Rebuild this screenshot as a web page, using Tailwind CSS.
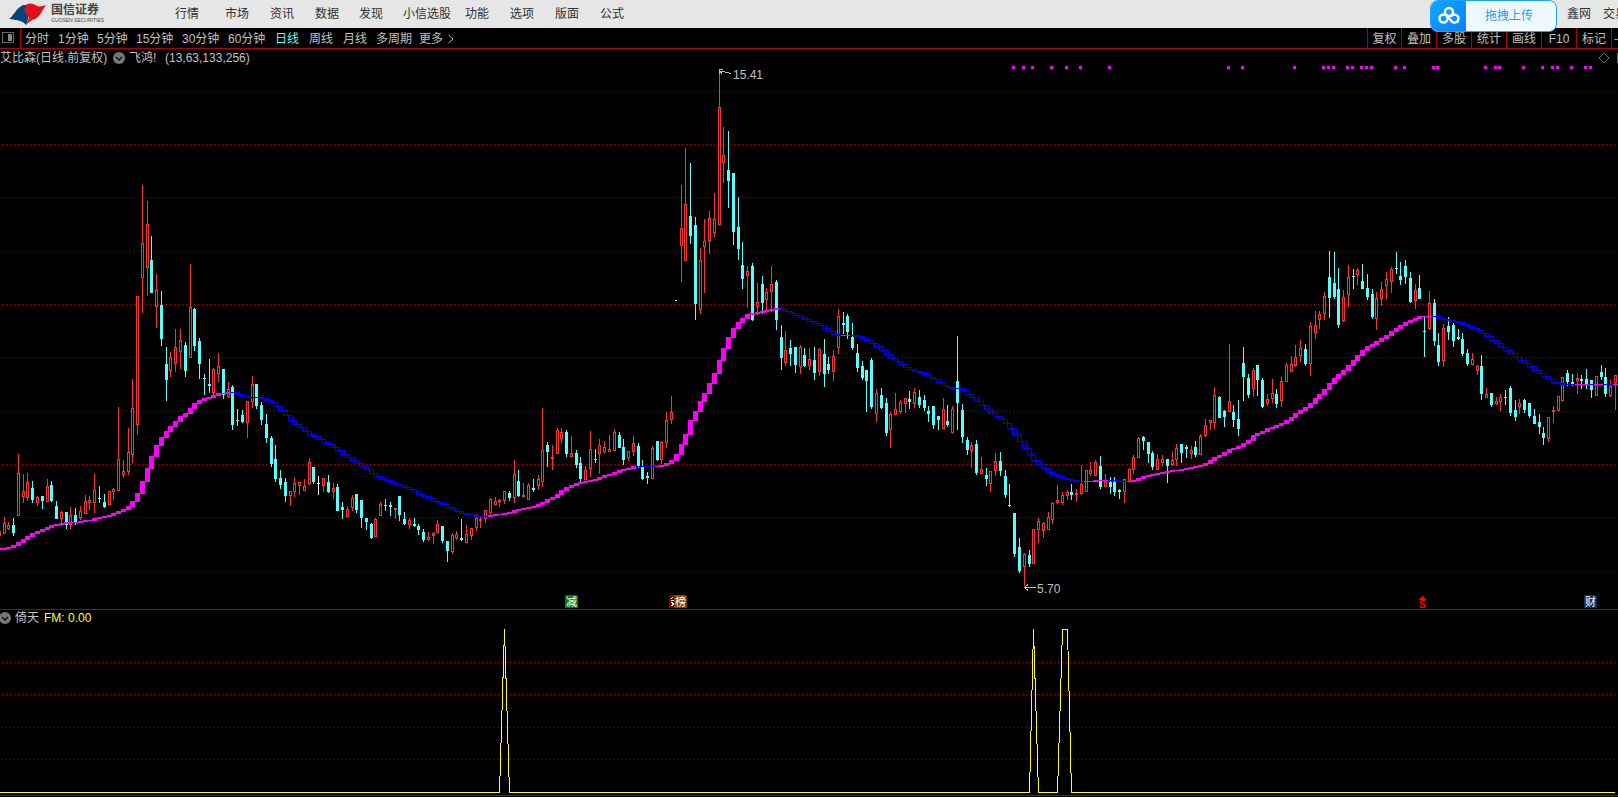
<!DOCTYPE html>
<html lang="zh-CN">
<head>
<meta charset="utf-8">
<title>国信证券</title>
<script src="https://cdn.jsdelivr.net/npm/@tailwindcss/browser@4"></script>
</head>
<body class="bg-black text-[#c0c0c0] text-xs font-['Liberation_Sans','Noto_Sans_CJK_SC',sans-serif] overflow-x-hidden">
<header class="relative flex h-7 items-center bg-[#e6e6e6] text-[#303030] whitespace-nowrap">
  <a href="#" class="flex w-[175px] shrink-0 items-center gap-1 pl-2" aria-label="国信证券">
    <svg class="h-6 w-[39px]" viewBox="0 0 39 24">
      <path d="M1 17 C6 14 7 7 15 3 L20 3 L20 17 L18 23 C14 18 8 18 1 17Z" fill="#00457c"/>
      <path d="M18 3 C22 0 26 2 29 4 C32 5 35 4 38 3 C34 8 33 14 27 17 C23 18 21 20 18 23 C19 19 22 17 20 14 C17 11 15 8 18 3Z" fill="#e0101c"/>
    </svg>
    <span class="flex flex-col text-[#444]">
      <span class="text-[12px] leading-[13px] font-bold">国信证券</span>
      <span class="text-[5px] leading-[7px]">GUOSEN SECURITIES</span>
    </span>
  </a>
  <nav class="grid grid-cols-[50px_45px_45px_44px_44px_62px_45px_45px_45px_auto] pb-px">
    <a href="#">行情</a><a href="#">市场</a><a href="#">资讯</a><a href="#">数据</a><a href="#">发现</a><a href="#">小信选股</a><a href="#">功能</a><a href="#">选项</a><a href="#">版面</a><a href="#">公式</a>
  </nav>
  <div class="ml-auto flex w-[51px] gap-3 overflow-hidden"><a href="#">鑫网</a><a href="#">交易</a></div>
  <button class="absolute top-0 right-[61px] z-10 flex h-8 w-[127px] overflow-hidden rounded-lg border border-[#18a5ff] bg-[#eef8ff] text-[#1b9bff]">
    <span class="flex h-full w-[35px] items-center justify-center bg-linear-to-br from-[#12a6ff] to-[#0d82ff]">
      <svg class="h-5 w-[22px]" viewBox="0 0 22 20" fill="none" stroke="#fff" stroke-width="2.4" stroke-linecap="round"><circle cx="11" cy="6" r="4"/><circle cx="5.5" cy="12.500" r="4"/><path d="M14 9.500 A4 4 0 1 1 13 14.500 L9 10"/><circle cx="19.500" cy="15.500" r=".3"/></svg>
    </span>
    <span class="flex h-full flex-1 items-center justify-center pr-1">拖拽上传</span>
  </button>
</header>

<div class="flex h-[21px] items-stretch border-b border-[#b00000] whitespace-nowrap">
  <button class="flex w-[21px] items-center justify-center border-r border-[#b00000] pr-1" aria-label="侧栏">
    <svg class="size-3" viewBox="0 0 12 12" shape-rendering="crispEdges"><rect x=".5" y=".5" width="11" height="10" fill="none" stroke="#666"/><rect x="6" y="2" width="4" height="7" fill="#888"/></svg>
  </button>
  <nav class="grid grid-cols-[33px_39px_39px_46px_46px_47px_34px_34px_33px_43px_28px_auto] items-center pt-0.5 pl-1">
    <a href="#">分时</a><a href="#">1分钟</a><a href="#">5分钟</a><a href="#">15分钟</a><a href="#">30分钟</a><a href="#">60分钟</a><a href="#" class="text-[#54ffff]">日线</a><a href="#">周线</a><a href="#">月线</a><a href="#">多周期</a><a href="#">更多</a>
    <svg class="h-3 w-2" viewBox="0 0 8 12" fill="none" stroke="#c0c0c0"><path d="M1.500 2 L6 6 L1.500 10"/></svg>
  </nav>
  <div class="ml-auto grid grid-cols-[34px_35px_35px_35px_35px_35px_35px_7px] overflow-hidden">
    <button class="border-l border-[#b00000] pt-0.5">复权</button><button class="border-l border-[#b00000] pt-0.5">叠加</button><button class="border-l border-[#b00000] pt-0.5">多股</button><button class="border-l border-[#b00000] pt-0.5">统计</button><button class="border-l border-[#b00000] pt-0.5">画线</button><button class="border-l border-[#b00000] pt-0.5">F10</button><button class="border-l border-[#b00000] pt-0.5">标记</button><button class="border-l border-[#b00000] pt-0.5 pl-0.5 text-left">-</button>
  </div>
</div>

<main>
  <section>
    <div class="flex h-[17px] items-center whitespace-nowrap">
      <h1 class="w-[113px]">艾比森(日线.前复权)</h1>
      <button aria-label="指标菜单"><svg class="size-3" viewBox="0 0 12 12"><circle cx="6" cy="6" r="6" fill="#777"/><path d="M3 5 L6 8 L9 5" fill="none" stroke="#111" stroke-width="1.500"/></svg></button>
      <span class="w-[40px] pl-1">飞鸿!</span><span>(13,63,133,256)</span>
      <svg class="ml-auto h-3 w-5" viewBox="0 0 20 12" fill="none" stroke="#707070"><path d="M6 1 L11 6 L6 11 L1 6Z" /><path d="M20 1.500 H19.500 V10.500 H20"/></svg>
    </div>
    <svg id="price" class="block w-full" viewBox="0 66 1618 543" shape-rendering="crispEdges" role="img" aria-label="日线K线图">
      <g id="grid"></g><g id="dots" fill="#f0f"></g><g id="candles"></g><g id="average"></g>
      <rect x="675" y="300" width="2" height="1" fill="#fff"/>
      <g fill="none" stroke="#c0c0c0"><path d="M719.500 74 V69.500 H723 M721 71 L731 73.500 M720 71 L722 74"/><path d="M1024 587.500 H1036 M1028 584.500 L1024.500 587.500 L1028 590.500"/></g>
      <g font-size="12" fill="#c0c0c0"><text x="733" y="79">15.41</text><text x="1037" y="593">5.70</text></g>
      <g>
        <path d="M565 595 H576 L578 597 V608 H565Z" fill="#008000"/>
        <rect x="669" y="595" width="6" height="13" fill="#800000"/>
        <path d="M671 599 L673 597 M671 600 H674 M671 602 L674 604 M671 606 L674 604" stroke="#fff" fill="none"/>
        <path d="M674 595 H685 L687 597 V608 H674Z" fill="#804000"/>
        <path d="M1584 595 H1595 L1597 597 V608 H1584Z" fill="#003366"/>
        <path d="M1422.500 596 L1426 600 H1419Z" fill="#f00"/>
      </g>
      <g font-size="11" fill="#fff"><text x="566" y="606">减</text><text x="675" y="606">榜</text><text x="1585" y="606">财</text><text x="1419" y="608" fill="#f00" font-weight="bold" font-size="10">S</text></g>
    </svg>
  </section>
  <section class="border-y border-[#b00000]">
    <div class="flex h-[17px] items-center pb-0.5 whitespace-nowrap">
      <button class="w-[15px]" aria-label="副图菜单"><svg class="size-3" viewBox="1 0 12 12"><circle cx="6" cy="6" r="6" fill="#777"/><path d="M3 5 L6 8 L9 5" fill="none" stroke="#111" stroke-width="1.500"/></svg></button>
      <span class="w-[29px]">倚天</span><span class="text-[#ffff22]">FM: 0.00</span>
    </div>
    <svg id="signal" class="block w-full" viewBox="0 627 1618 168" shape-rendering="crispEdges" role="img" aria-label="FM 指标">
      <g id="signalGrid"></g>
      <path d="M0 792.500 H499.500 L504.500 629 L509.500 792.500 H1029.500 L1033.500 629 L1038.500 792.500 H1057.500 L1062.500 629.500 H1067.500 L1071.500 792.500 H1615" fill="none" stroke="#ff0"/>
    </svg>
  </section>
</main>

<script>
// Each block: x and y origin, then candles in one-third pixel units:
// kind (r = up, c = down, w = flat), centre x, high, body top, body bottom, low.
const blocks = [
[0,170,`r -3 1083 1083 1098 1098;r 13 1041 1059 1092 1092;r 25 1056 1065 1077 1080;c 40 1044 1065 1089 1098;r 55 852 909 1038 1038;r 70 912 963 981 999;r 82 909 936 984 993;c 97 933 954 990 999;r 112 978 981 999 1008;c 127 978 978 993 1017;r 142 927 948 996 996;c 154 933 945 993 996;c 169 993 1008 1047 1047;r 184 1023 1026 1047 1068;c 199 1026 1026 1065 1077;r 211 1011 1035 1065 1077;c 226 1014 1035 1056 1065;r 241 1008 1023 1044 1050;r 256 975 993 1032 1032;r 268 978 990 999 1020;r 283 912 960 999 1029;c 298 948 984 987 999;c 313 972 996 1011 1014;r 328 963 963 1005 1005;r 340 954 957 966 990;r 355 711 867 963 963;r 370 870 903 915 924;r 385 774 846 906 915;r 397 627 714 855 879;r 412 378 378 765 795;r 427 45 219 324 429;r 442 93 162 294 378;c 454 198 270 369 369;r 469 312 360 411 474;c 484 363 405 507 528;c 499 531 582 630 693;r 511 546 561 603 621;r 526 477 531 582 606;r 541 477 510 546 597;c 556 516 525 603 621;r 571 282 411 564 564;c 583 414 417 528 543;c 598 504 513 582 627;c 613 612 624 627 675;c 628 567 642 648 669;r 640 594 597 669 675;r 655 549 588 612 636;c 670 597 597 675 687;r 685 636 657 681 684;c 697 645 651 765 780;c 712 717 750 753 768;c 727 720 735 756 759;r 742 693 693 759 804;r 757 618 642 696 714;c 769 642 642 708 717;c 784 696 705 750 765;c 799 732 762 804 819;c 814 798 804 882 891;c 826 825 867 927 936`],
[240,340,`c 121 390 414 435 447;c 136 414 426 468 486;r 151 453 453 468 498;r 163 411 429 456 471;r 178 426 426 438 465;r 193 417 438 453 453;r 208 354 366 432 435;c 220 381 381 426 432;w 235 408 430 433 465;r 250 414 414 438 456;c 265 405 426 456 459;r 280 429 444 456 477;c 292 432 441 513 513;c 307 486 501 510 537;r 322 498 507 531 531;r 337 465 474 504 513;c 349 462 462 510 519;c 364 480 480 534 564;c 379 534 534 546 570;c 394 549 552 594 597;r 406 534 537 591 591;r 421 486 492 528 528;c 436 477 495 498 513;c 451 486 495 501 528;r 466 504 504 510 537;c 478 468 468 525 543;c 493 516 537 552 555;r 508 534 540 555 567;c 523 534 552 558 561;c 535 552 558 570 585;c 550 567 576 600 606;r 565 576 591 600 603;r 580 576 579 588 612;r 592 540 552 579 579;c 607 558 558 603 609;c 622 603 603 633 666;r 637 579 585 636 642;r 649 573 582 594 600;c 664 537 594 600 603;r 679 555 582 609 609;r 694 564 564 588 600;r 709 522 534 564 573;r 721 531 537 543 564;r 736 510 510 537 549;r 751 474 477 519 528;r 766 471 483 495 495;r 778 477 480 486 501;r 793 453 453 483 492;c 808 453 459 474 483;r 823 360 402 474 489;c 835 390 423 468 471`],
[480,380,`r 130 309 345 351 351;r 145 309 315 360 360;c 160 297 324 330 336;r 175 285 297 318 330;r 187 84 210 306 321;c 202 186 195 216 261;r 217 195 231 237 270;r 232 144 150 222 222;r 244 144 156 177 189;c 259 150 156 222 231;r 274 168 219 231 231;c 289 210 219 255 264;c 301 231 249 297 306;r 316 258 270 300 306;r 331 153 207 267 291;c 346 207 237 240 249;r 358 177 195 222 282;r 373 183 201 216 219;r 388 165 207 216 216;r 403 147 156 213 213;c 418 156 165 204 204;c 430 177 201 240 255;r 445 213 213 234 243;r 460 168 189 216 228;c 475 189 198 261 264;c 487 240 261 297 300;c 502 276 288 294 312;r 517 198 204 297 297;c 532 183 183 240 243;r 544 183 186 240 252;r 559 96 120 189 204;r 574 48 96 120 132`],
[660,60,`r 64 375 504 558 666;r 76 264 432 603 603;c 91 309 468 528 552;c 106 471 495 732 780;r 121 564 600 750 762;r 133 477 543 561 699;r 148 453 474 543 582;r 163 399 477 519 531;r 178 36 141 495 495;r 190 201 285 309 369;c 205 213 330 363 444;c 220 339 339 516 555;c 235 411 501 567 600;c 247 546 615 657 687;r 262 618 633 648 744;c 277 609 618 780 783;r 292 669 726 741 765;c 307 648 672 729 762;r 319 684 696 720 759;r 334 618 672 696 756;c 349 660 666 780 810;c 364 795 831 894 930;r 376 813 870 909 918;c 391 840 864 882 918;c 406 861 861 915 939;r 421 855 861 921 942;c 433 864 885 918 921;r 448 864 897 918 930;c 463 861 900 939 960;r 478 864 867 936 948;c 493 837 882 942 981;c 505 891 912 930 942;r 520 870 888 936 963;r 535 747 768 864 882;c 550 756 789 795 822;c 562 762 768 816 837;c 577 789 831 864 870;c 592 852 879 924 936;c 607 903 918 954 960`],
[760,280,`c 319 270 270 303 396;c 334 234 240 381 387;r 349 327 339 402 426;c 364 324 345 384 387;c 379 354 369 459 468;r 391 396 402 450 504;r 406 339 387 405 405;r 421 360 366 396 402;r 436 354 354 372 399;c 448 333 357 366 387;r 463 324 336 372 384;c 478 330 351 375 384;c 493 345 360 384 393;c 505 378 393 402 426;c 520 378 378 435 447;c 535 408 408 420 450;r 550 354 387 447 447;c 562 375 423 435 441;r 577 378 387 459 459;c 592 168 303 369 450;c 607 372 390 471 489;c 622 471 480 510 525;r 634 486 495 513 564;c 649 480 492 579 585;r 664 531 567 582 582;c 679 564 585 597 618;r 691 573 573 612 636;r 706 519 543 573 588;c 721 516 543 573 588;c 736 570 588 645 654;c 748 612 675 678 681`],
[1010,400,`c 13 339 339 462 471;c 28 414 441 513 519;r 43 459 462 501 558;c 58 450 465 492 501;r 70 387 387 492 492;r 85 354 363 390 429;r 100 366 369 393 414;r 115 336 351 390 390;r 127 306 309 360 372;r 142 255 300 309 312;r 157 276 285 309 315;r 172 270 276 288 300;c 184 252 276 285 300;r 199 267 279 285 306;r 214 195 252 282 285;r 229 210 210 276 276;r 241 186 210 222 228;r 256 180 186 228 228;c 271 168 198 261 267;r 286 222 243 261 261;c 301 231 246 261 282;c 313 231 246 276 288;c 328 267 270 276 297;r 343 237 237 276 309;r 358 204 207 246 249;r 370 165 171 210 222;r 385 111 114 174 174;c 400 108 111 123 150;c 415 126 126 162 189;c 427 153 159 201 210;r 442 162 177 210 210;r 457 165 177 189 198;c 472 177 177 198 249;r 487 153 180 195 198;r 499 132 144 180 198;c 514 132 132 159 189;c 529 135 141 147 174;r 544 138 150 162 177;c 556 123 141 165 171;r 571 102 108 165 165;r 586 57 75 108 111;r 601 60 60 69 90;r 613 -39 -15 69 87;c 628 -12 -9 54 54;c 643 30 33 51 81;r 658 -168 3 36 36;c 670 15 36 60 81;c 685 0 57 87 108`],
[1230,230,`c 40 351 399 441 513;c 55 432 444 495 504;r 70 414 420 477 501;c 82 405 405 450 498;c 97 444 450 531 534;r 112 492 507 522 528;r 127 447 489 507 519;c 139 477 492 522 534;r 154 441 453 513 531;r 169 399 405 456 456;r 184 378 402 426 426;r 196 345 381 408 411;r 211 330 354 378 396;c 226 342 357 402 408;r 241 276 288 402 438;r 256 243 285 309 327;r 268 243 252 270 297;r 283 186 198 252 270;c 298 63 141 204 264;c 313 66 159 201 207;c 325 114 177 285 294;r 340 180 201 273 276;r 355 105 141 195 231;c 370 117 138 141 177;r 382 114 120 135 165;c 397 102 153 177 177;c 412 132 174 201 210;c 427 177 192 261 267;r 439 186 204 267 300;r 454 156 177 207 228;r 469 126 147 168 207;r 484 111 117 156 189;c 499 66 114 117 132;c 511 96 138 150 165;c 526 90 108 141 162;c 541 126 144 216 219;r 556 162 180 213 237;c 568 135 174 207 207;c 583 261 303 306 381;r 598 183 219 297 300;c 613 207 219 333 348;c 625 309 345 396 408;r 640 282 294 393 411;c 655 261 288 306 330;c 670 279 285 333 351;c 685 297 321 327 330;c 697 309 327 372 378;c 712 357 369 402 408;r 727 369 387 405 405;r 742 405 408 423 435;c 754 375 408 492 510;r 769 474 492 504 504;c 784 489 489 525 531;r 799 501 513 522 525;r 811 492 501 516 543;c 826 480 501 504 525;c 841 468 474 549 558;c 856 510 540 561 573;r 868 507 519 531 552;c 883 507 510 540 549;c 898 519 519 558 564;c 913 537 558 582 582;c 928 552 576 591 612;c 940 591 609 624 645;r 955 561 561 627 636;r 970 528 540 546 579;r 985 498 498 543 543;r 997 441 441 513 513;c 1012 420 429 456 468;c 1027 432 456 465 468;r 1042 429 444 453 492;c 1054 435 447 453 477;c 1069 417 447 465 477;c 1084 450 450 480 504;r 1099 438 438 498 498;c 1114 405 426 441 450;c 1126 414 441 492 501;r 1141 450 468 498 501;r 1156 435 435 459 540`]];

// Moving average: x,y pairs.
const line = `-5,550 0,549 13,545 18,542 23,539 27,536 32,533 42,529 51,525 61,523 66,522 75,522 80,521 89,520 94,518 99,517 109,515 113,513 118,511 123,509 128,506 132,501 137,493 142,481 147,468 151,456 156,445 161,437 166,431 170,426 175,421 180,416 185,413 190,408 194,403 199,400 204,398 209,397 213,395 218,393 228,392 232,392 237,394 242,396 252,397 261,398 266,400 271,402 275,406 280,410 285,415 290,420 294,424 299,427 304,431 309,434 313,436 318,439 323,442 328,444 333,447 337,450 342,454 347,457 352,460 356,463 361,466 366,469 371,473 375,476 380,478 385,480 395,484 404,487 414,491 418,494 423,496 428,498 433,501 442,504 447,507 456,511 466,514 476,516 485,516 490,515 504,513 509,512 514,510 523,508 533,506 538,504 542,502 547,499 552,497 557,494 561,490 566,487 571,485 580,482 595,479 604,475 614,472 623,469 633,466 638,466 656,466 661,465 666,463 671,460 676,454 681,444 686,432 690,420 695,411 704,393 709,383 714,373 719,360 723,348 728,337 733,328 738,322 742,318 747,314 752,313 762,311 776,308 781,309 790,313 795,315 800,317 809,321 819,325 828,331 833,334 838,335 852,335 857,336 862,338 866,340 871,343 876,346 881,350 886,354 890,358 895,361 900,364 905,367 909,369 919,372 924,374 928,377 933,379 938,382 947,387 957,388 962,390 967,394 971,397 976,401 981,405 986,409 990,413 995,416 1000,419 1005,423 1009,428 1014,434 1019,441 1024,448 1029,454 1033,460 1038,464 1043,468 1048,472 1052,474 1062,478 1071,480 1076,481 1086,481 1095,480 1110,480 1119,481 1129,481 1133,480 1138,478 1143,476 1157,473 1167,471 1181,469 1195,466 1205,463 1210,460 1214,457 1219,455 1224,452 1229,449 1238,446 1243,443 1248,440 1252,436 1257,433 1267,428 1277,425 1281,423 1286,420 1291,417 1295,413 1300,410 1305,407 1310,403 1315,398 1319,394 1324,389 1329,383 1334,378 1338,374 1343,370 1348,365 1353,360 1357,355 1362,350 1367,346 1372,344 1381,338 1386,335 1391,331 1400,325 1405,322 1415,318 1419,316 1429,316 1434,316 1438,318 1448,320 1458,322 1467,326 1477,330 1481,333 1486,336 1491,340 1496,343 1500,347 1510,353 1519,360 1529,366 1534,370 1539,373 1548,379 1553,382 1562,384 1625,384`.split(' ').map(p => p.split(',').map(Number));
const fallingSpans = [[232,486],[638,652],[779,841],[850,1083],[1108,1125],[1432,1573],[1589,1592],[1604,1612]];

const candles = [];
for (const [ox, oy, rows] of blocks)
  for (const row of rows.split(';')) {
    const [kind, x, ...v] = row.split(' ');
    candles.push([kind, ox + Math.floor(x / 3), ...v.map(n => oy + Math.round(n / 3))]);
  }
const colours = { r: '#ff3232', c: '#54ffff', w: '#ffffff' };
const box = (x, y, w, h, f) => `<rect x="${x}" y="${y}" width="${w}" height="${Math.max(h, 1)}" fill="${f}"/>`;
const frame = (x, y, w, h, c) => h < 3 ? box(x, y, w, h, c)
  : `<rect x="${x + 0.5}" y="${y + 0.5}" width="${w - 1}" height="${h - 1}" fill="none" stroke="${c}"/>`;
document.getElementById('candles').innerHTML = candles.map(([k, x, hi, top, bot, lo]) => {
  const c = colours[k];
  return k === 'r'
    ? (top > hi ? box(x, hi, 1, top - hi, c) : '') + (lo > bot ? box(x, bot, 1, lo - bot, c) : '') + frame(x - 1, top, 3, bot - top, c)
    : box(x, hi, 1, lo - hi, c) + box(x - 1, top, 3, bot - top, c);
}).join('');

const valueAt = x => {
  const i = Math.max(1, line.findIndex(p => p[0] >= x));
  const [a, b] = [line[i - 1], line[i]];
  return Math.round(a[1] + (b[1] - a[1]) * (x - a[0]) / (b[0] - a[0]));
};
// The day at 676 traded at a single price and has no candle, but still has an average.
const days = [...candles.map(c => c[1]), 676].sort((a, b) => a - b);
document.getElementById('average').innerHTML = days.slice(1).map((x, i) => {
  const a = valueAt(days[i]), b = valueAt(x), y = Math.min(a, b), h = Math.abs(a - b) + 1;
  return fallingSpans.some(([s, e]) => x >= s && x <= e) ? frame(x - 2, y, 5, h, '#0000ff') : box(x - 2, y, 5, h, '#ff00ff');
}).join('') + box(0, 548, 3, 2, '#ff00ff');

const gridRow = y => `<path d="M2 ${y + 0.5} H1618" stroke="#b00000" stroke-dasharray="1 3"/>`;
document.getElementById('grid').innerHTML = [91,144,197,251,304,357,411,464,517,571].map(gridRow).join('');
document.getElementById('signalGrid').innerHTML = [662,694,727,759].map(gridRow).join('');
document.getElementById('dots').innerHTML = [1012,1022,1031,1050,1065,1079,1108,1227,1241,1293,1322,1327,1332,1346,1351,1360,1365,1370,1394,1403,1432,1436,1484,1494,1498,1522,1541,1551,1556,1570,1584,1589]
  .map(x => `<rect x="${x}" y="66" width="3" height="3"/>`).join('');
</script>
</body>
</html>
